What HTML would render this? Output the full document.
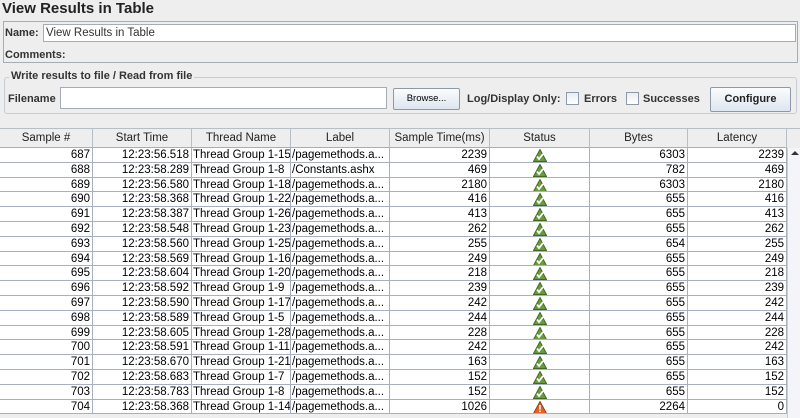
<!DOCTYPE html>
<html><head><style>
*{box-sizing:border-box;margin:0;padding:0}
body{width:800px;height:418px;background:#eeeeee;font-family:"Liberation Sans",sans-serif;font-size:11px;color:#000;position:relative;overflow:hidden}
.a{position:absolute}
.b{font-weight:bold;color:#333}
.inp{background:#fff;border:1px solid #a5acb5}
.btn{border:1px solid #8e99a8;border-radius:2px;background:linear-gradient(#fbfcfd,#dde6f0);text-align:center}
.cb{width:13px;height:13px;border:1px solid #8f9aa8;background:linear-gradient(#e8edf3,#fff)}
.hd{top:129px;height:19px;border-right:1px solid #b8bec8;border-bottom:1px solid #a8aeb8;background:#eeeeee;text-align:center;line-height:18px;font-size:11.5px;color:#222}
.row{position:absolute;left:0;width:787px;background:#fff;border-bottom:1px solid #a6b0c0;font-size:11.5px;line-height:14px}
.c{position:absolute;top:0;bottom:0;border-right:1px solid #a6b0c0;white-space:nowrap;overflow:hidden}
.r{text-align:right;padding-right:2px}
.l{padding-left:1px}
</style></head><body>
<div class="a b" style="left:2px;top:0;font-size:15px;line-height:18px;color:#222">View Results in Table</div>
<div class="a" style="left:3px;top:21px;width:795px;height:42px;border:1px solid #a5acb5"></div>
<div class="a b" style="left:5px;top:27px">Name:</div>
<div class="a inp" style="left:43px;top:24px;width:753px;height:18px;padding-left:2px;line-height:16px;color:#333;font-size:11.5px">View Results in Table</div>
<div class="a b" style="left:5px;top:49px">Comments:</div>
<div class="a" style="left:4px;top:77px;width:793px;height:37px;border:1px solid #c6ccd4;border-radius:3px"></div>
<div class="a b" style="left:9px;top:70px;background:#eee;padding:0 2px">Write results to file / Read from file</div>
<div class="a b" style="left:8px;top:93px">Filename</div>
<div class="a inp" style="left:60px;top:87px;width:327px;height:22px"></div>
<div class="a btn" style="left:393px;top:88px;width:67px;height:22px;font-size:9.5px;line-height:20px">Browse...</div>
<div class="a b" style="left:467px;top:93px">Log/Display Only:</div>
<div class="a cb" style="left:566px;top:92px"></div>
<div class="a b" style="left:584px;top:93px">Errors</div>
<div class="a cb" style="left:626px;top:92px"></div>
<div class="a b" style="left:643px;top:93px">Successes</div>
<div class="a btn b" style="left:710px;top:87px;width:81px;height:25px;line-height:23px;color:#222">Configure</div>
<div class="a" style="left:0;top:128px;width:800px;height:1px;background:#b8bec8"></div>
<div id="t"></div>
<div class="a" style="left:787px;top:148px;width:13px;height:270px;background:#f3f5f8;border-left:1px solid #c8ced6"></div>
<div class="a" style="left:791px;top:151px;width:0;height:0;border-left:4px solid transparent;border-right:4px solid transparent;border-bottom:4px solid #333"></div>
<script>
var cols=[[0,93,"Sample #"],[93,192,"Start Time"],[192,291,"Thread Name"],[291,390,"Label"],[390,490,"Sample Time(ms)"],[490,590,"Status"],[590,688,"Bytes"],[688,787,"Latency"]];
var h="";cols.forEach(function(c){h+='<div class="a hd" style="left:'+c[0]+'px;width:'+(c[1]-c[0])+'px">'+c[2]+'</div>'});
var d=[[687,"12:23:56.518","1-15","/pagemethods.a...",2239,6303,2239],[688,"12:23:58.289","1-8","/Constants.ashx",469,782,469],[689,"12:23:56.580","1-18","/pagemethods.a...",2180,6303,2180],[690,"12:23:58.368","1-22","/pagemethods.a...",416,655,416],[691,"12:23:58.387","1-26","/pagemethods.a...",413,655,413],[692,"12:23:58.548","1-23","/pagemethods.a...",262,655,262],[693,"12:23:58.560","1-25","/pagemethods.a...",255,654,255],[694,"12:23:58.569","1-16","/pagemethods.a...",249,655,249],[695,"12:23:58.604","1-20","/pagemethods.a...",218,655,218],[696,"12:23:58.592","1-9","/pagemethods.a...",239,655,239],[697,"12:23:58.590","1-17","/pagemethods.a...",242,655,242],[698,"12:23:58.589","1-5","/pagemethods.a...",244,655,244],[699,"12:23:58.605","1-28","/pagemethods.a...",228,655,228],[700,"12:23:58.591","1-11","/pagemethods.a...",242,655,242],[701,"12:23:58.670","1-21","/pagemethods.a...",163,655,163],[702,"12:23:58.683","1-7","/pagemethods.a...",152,655,152],[703,"12:23:58.783","1-8","/pagemethods.a...",152,655,152],[704,"12:23:58.368","1-14","/pagemethods.a...",1026,2264,0]];
var ok='<svg width="14" height="13" viewBox="0 0 14 13"><path d="M7 0.5L13.5 12.5H0.5Z" fill="#6a9a3c" stroke="#3f6a20"/><path d="M4 7.5L6 10L10 5" stroke="#fff" stroke-width="1.8" fill="none"/></svg>';
var er='<svg width="14" height="13" viewBox="0 0 14 13"><path d="M7 0.5L13.5 12.5H0.5Z" fill="#e0622a" stroke="#9a3a10"/><rect x="6.2" y="4" width="1.6" height="4.5" fill="#fff"/><rect x="6.2" y="9.5" width="1.6" height="1.6" fill="#fff"/></svg>';
d.forEach(function(r,i){var y=Math.round(148+i*14.8),y2=Math.round(148+(i+1)*14.8);
var v=[r[0],r[1],"Thread Group "+r[2],r[3],r[4],(r[0]==704)?er:ok,r[5],r[6]];
h+='<div class="row" style="top:'+y+'px;height:'+(y2-y)+'px">';
cols.forEach(function(c,j){var cl=(j==2||j==3)?"l":(j==5?"":"r");
h+='<div class="c '+cl+'" style="left:'+c[0]+'px;width:'+(c[1]-c[0])+'px;'+(j==5?'text-align:center;padding-top:1px':'')+'">'+v[j]+'</div>'});
h+='</div>'});
document.getElementById("t").innerHTML=h;
</script>
</body></html>
